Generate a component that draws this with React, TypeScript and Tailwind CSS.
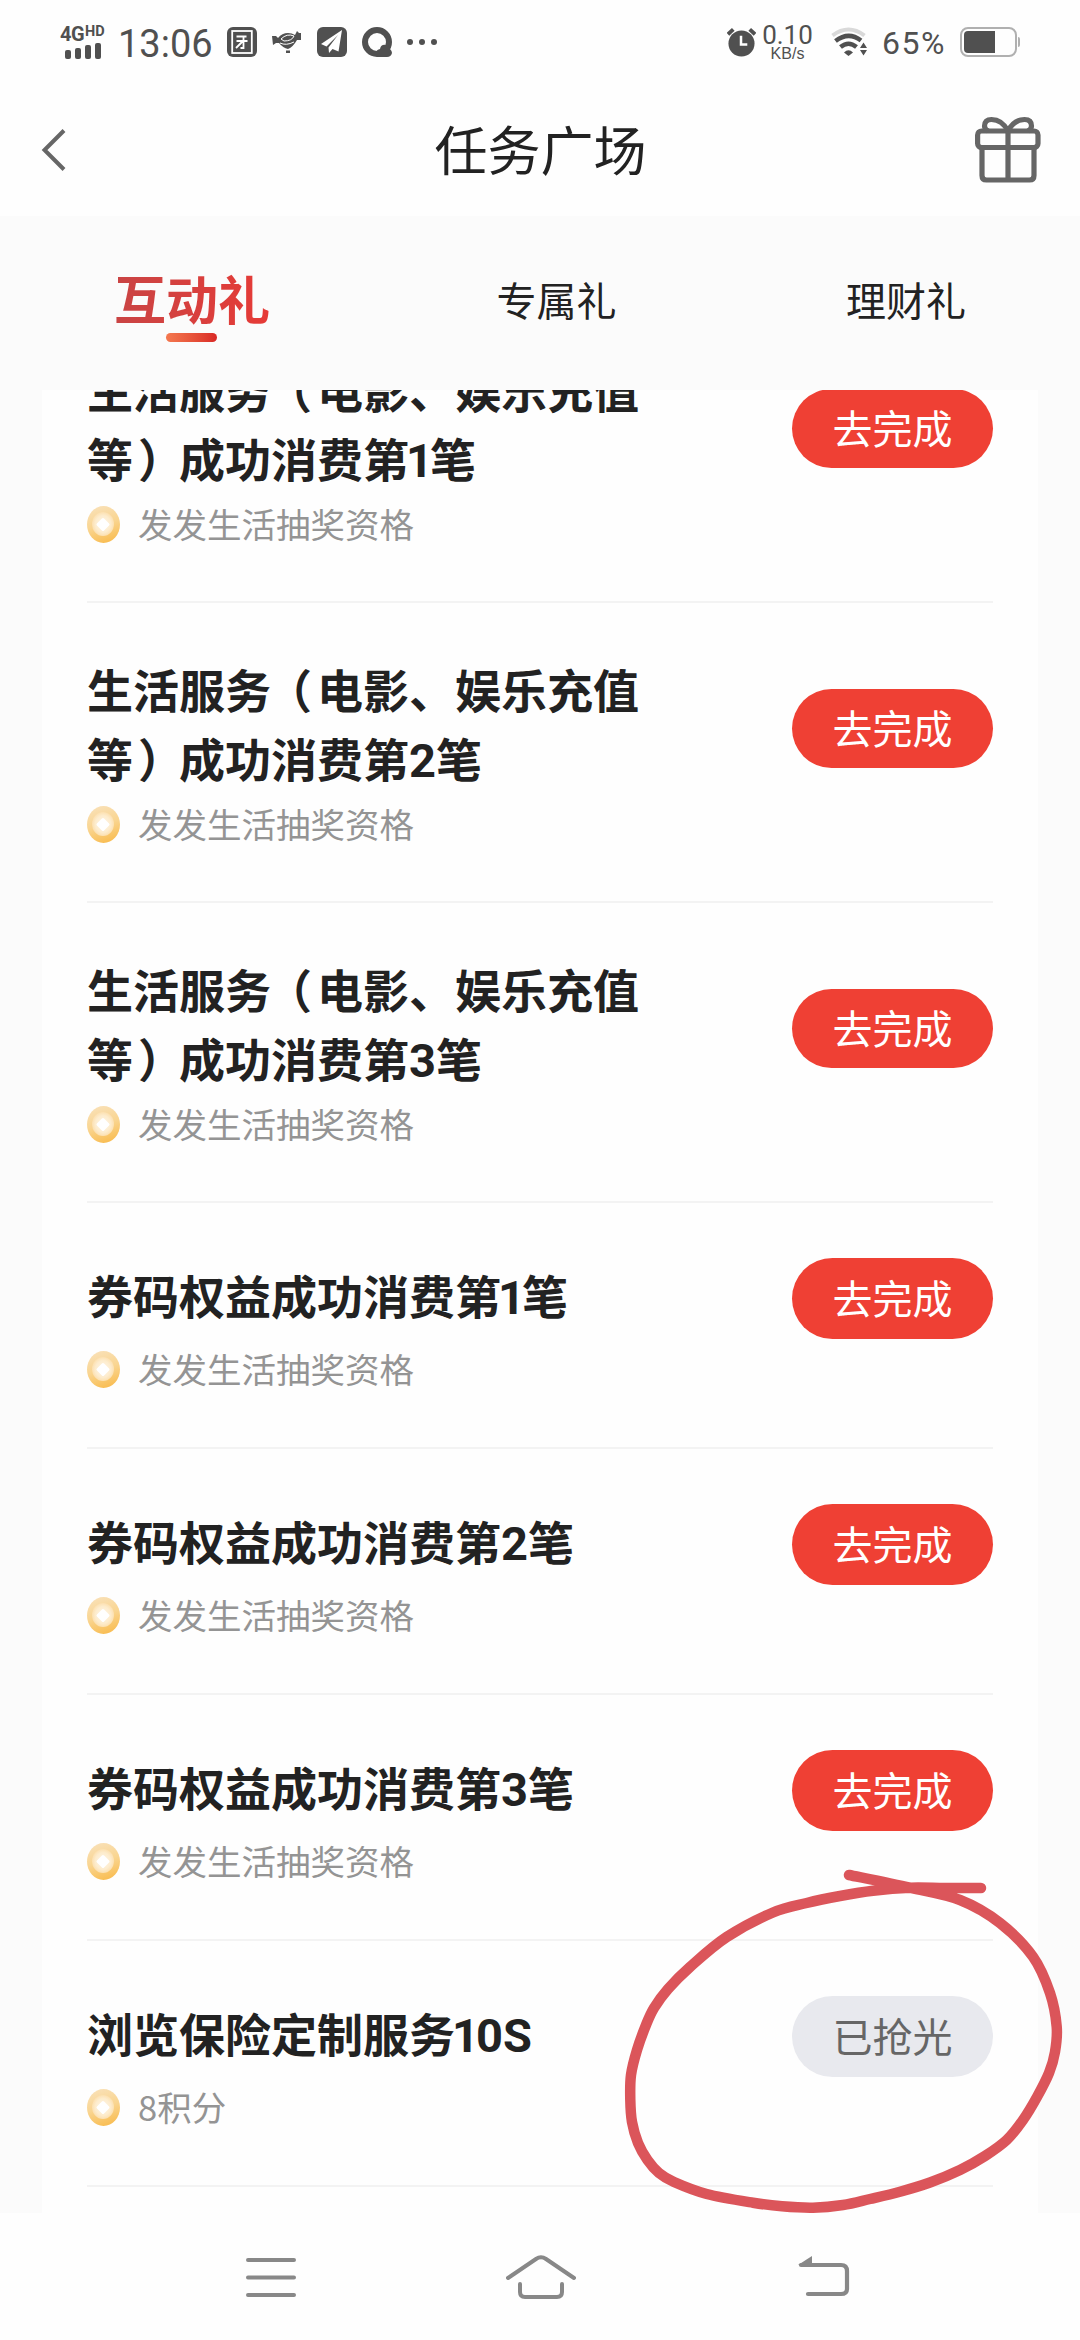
import React from "react";

type Task = { lines: React.ReactNode[]; reward: string; done?: boolean };

const One = () => <span className="-ml-[3px] -mr-[3px] font-['Roboto'] text-[47px]">1</span>;
const Num = ({ children }: { children: React.ReactNode }) => (
  <span className="font-['Roboto'] text-[47px]">{children}</span>
);
const life = (n: React.ReactNode) => [
  <>生活服务<span className="relative -left-[5px]">（</span>电影、娱乐充值</>,
  <>等<span className="relative left-[5px]">）</span>成功消费第{n}笔</>,
];
const REWARD = "发发生活抽奖资格";

const tasks: Task[] = [
  { lines: life(<One />), reward: REWARD },
  { lines: life(<Num>2</Num>), reward: REWARD },
  { lines: life(<Num>3</Num>), reward: REWARD },
  { lines: [<>券码权益成功消费第<One />笔</>], reward: REWARD },
  { lines: [<>券码权益成功消费第<Num>2</Num>笔</>], reward: REWARD },
  { lines: [<>券码权益成功消费第<Num>3</Num>笔</>], reward: REWARD },
  { lines: [<>浏览保险定制服务<One /><Num>0S</Num></>], reward: "8积分", done: true },
];

const strokePoints: [number, number][] = [
  [981, 1888], [945, 1888], [910, 1887.7], [873, 1890.7], [840, 1896], [806.7, 1903], [773, 1912.5],
  [726.7, 1937], [690, 1967], [668, 1989], [654, 2008], [646, 2025], [637, 2050], [631, 2075], [630.3, 2100],
  [632, 2122], [638, 2143], [647.5, 2160], [659, 2173], [674, 2182], [706.7, 2194], [753, 2202.7],
  [782, 2206.3], [813, 2207.7], [843, 2205], [870, 2199], [900, 2191.7], [930, 2182.500],
  [960, 2170], [985, 2156], [1006.7, 2140], [1023, 2120], [1037, 2097], [1049, 2073], [1055, 2052], [1056.7, 2026.7],
  [1050, 1993], [1033, 1956.7], [1000, 1923], [960, 1900], [910, 1887.7], [849, 1875],
];

/* Smooth curve through the points (Catmull-Rom converted to cubic Béziers). */
function smooth(p: [number, number][]) {
  let d = `M${p[0][0]} ${p[0][1]}`;
  for (let i = 0; i < p.length - 1; i++) {
    const a = p[Math.max(i - 1, 0)];
    const b = p[i];
    const c = p[i + 1];
    const e = p[Math.min(i + 2, p.length - 1)];
    d += `C${b[0] + (c[0] - a[0]) / 6} ${b[1] + (c[1] - a[1]) / 6} ${c[0] - (e[0] - b[0]) / 6} ${c[1] - (e[1] - b[1]) / 6} ${c[0]} ${c[1]}`;
  }
  return d;
}

function Coin() {
  return (
    <svg className="-mt-[1px] h-[37px] w-[33px] shrink-0" viewBox="0 0 33 37">
      <defs>
        <linearGradient id="rim" x1="0.3" y1="0" x2="0.6" y2="1">
          <stop offset="0" stopColor="#f9e0b6" />
          <stop offset="0.5" stopColor="#f9d591" />
          <stop offset="1" stopColor="#f9bd52" />
        </linearGradient>
        <radialGradient id="core">
          <stop offset="0" stopColor="#fff6e8" />
          <stop offset="0.7" stopColor="#fdeccd" />
          <stop offset="1" stopColor="#fce0b0" />
        </radialGradient>
      </defs>
      <ellipse cx="16.5" cy="18.5" rx="16.5" ry="18.5" fill="url(#rim)" />
      <ellipse cx="16" cy="18" rx="11" ry="12" fill="url(#core)" />
      <path d="M16 13.500L21 18.500L16 23.500L11 18.500Z" fill="#fff" stroke="#fff" strokeWidth="3" strokeLinejoin="round" />
    </svg>
  );
}

function StatusBar() {
  return (
    <div className="flex h-[84px] shrink-0 items-center pl-[60px] text-[#505050]">
      <div className="flex w-[47px] flex-col">
        <div className="flex h-[17px] items-start font-['Roboto'] leading-none font-bold">
          <span className="w-[25px] text-[20px] leading-[17px] tracking-[-0.5px]">4G</span>
          <span className="text-[14.500px] leading-[11px]">HD</span>
        </div>
        <div className="ml-[5px] flex h-[16px] items-end gap-[4px]">
          <i className="h-[9px] w-[6px] rounded-[2px] bg-[#505050]" />
          <i className="h-[11px] w-[6px] rounded-[2px] bg-[#505050]" />
          <i className="h-[14px] w-[6px] rounded-[2px] bg-[#505050]" />
          <i className="h-[16px] w-[6px] rounded-[2px] bg-[#505050]" />
        </div>
      </div>
      <div className="ml-[11px] w-[109px] pt-[4px] font-['Roboto'] text-[38px] leading-[44px] whitespace-nowrap">13:06</div>
      <svg className="h-[30px] w-[30px]" viewBox="0 0 30 30">
        <rect width="30" height="30" rx="6" fill="#505050" />
        <rect x="5.200" y="4" width="19.600" height="22" fill="none" stroke="#fff" strokeWidth="1.800" />
        <path d="M9.500 9.500H19.500M9.500 14H20.500M16.500 9.500V21H13.500M15.500 14.500L9 21" fill="none" stroke="#fff" strokeWidth="1.800" />
      </svg>
      <svg className="ml-[15px] h-[30px] w-[30px]" viewBox="0 0 30 30" fill="#505050">
        <path d="M0 9L4 9L6 11Q10 6 16 6Q20 6 23 8L25 4L27 6L29 6L29 13L25 13Q21 20 16 22Q11 21 7 16L4 16L1 18Z" />
        <path d="M9 12Q15 6 22 9Q20 14 12 14ZM8 16Q14 19 22 15" fill="none" stroke="#fff" strokeWidth="1" />
        <rect x="14" y="23.500" width="4" height="2.500" />
      </svg>
      <svg className="ml-[15px] h-[30px] w-[30px]" viewBox="0 0 30 30">
        <rect width="30" height="30" rx="6" fill="#505050" />
        <path d="M25 3L4 17L9.500 19.500L21 8L11.500 20.500L12 26L15.500 22L21.500 24.500Z" fill="#fff" />
      </svg>
      <svg className="ml-[15px] h-[30px] w-[30px]" viewBox="0 0 30 30">
        <circle cx="15" cy="15" r="12" fill="none" stroke="#505050" strokeWidth="6" />
        <path d="M15 27Q13 23 18 22Q19 17 24 18Q28 19 28 22Q30 24 30 26Q29 30 25 30H15Z" fill="#505050" />
      </svg>
      <div className="ml-[15px] flex w-[30px] justify-between">
        <i className="size-[6px] rounded-full bg-[#505050]" />
        <i className="size-[6px] rounded-full bg-[#505050]" />
        <i className="size-[6px] rounded-full bg-[#505050]" />
      </div>
      <svg className="ml-[290px] h-[30px] w-[29px]" viewBox="0 0 30 30">
        <circle cx="15" cy="16.500" r="13.500" fill="#505050" />
        <path d="M1 7L6.500 2M29 7L23.500 2" stroke="#505050" strokeWidth="4" />
        <path d="M14.500 8.500V17.500H21" fill="none" stroke="#fff" strokeWidth="2.600" />
      </svg>
      <div className="ml-[6px] flex w-[51px] flex-col items-center font-['Roboto'] leading-none">
        <span className="text-[26px] leading-[24px]">0.10</span>
        <span className="font-['Liberation_Sans'] text-[16px] leading-[14px]">KB/s</span>
      </div>
      <svg className="ml-[18px] h-[30px] w-[37px]" viewBox="0 0 37 30" fill="none" stroke="#505050">
        <path d="M1.500 8.500Q17.500 -3.500 33.500 8.500" stroke="#d9d9d9" strokeWidth="4" />
        <path d="M4.500 14Q17.500 4 30 13.500" strokeWidth="4.500" />
        <path d="M9.500 20Q17.500 13.500 25.500 20" strokeWidth="4.500" />
        <path d="M13 25.500Q17.500 21 22 25.500L17.500 29Z" fill="#505050" stroke="none" />
        <path d="M29 21L32.500 15.500L36 21ZM29 23L32.500 28.500L36 23Z" fill="#505050" stroke="none" />
      </svg>
      <div className="ml-[14px] w-[70px] pt-[2px] font-['Roboto'] text-[32px] leading-[36px] tracking-[1.500px]">65%</div>
      <div className="ml-[8px] flex items-center">
        <div className="h-[30px] w-[57px] rounded-[8px] border-2 border-[#b0b0b0] p-[2px]">
          <div className="h-full w-[31px] rounded-l-[4px] bg-[#505050]" />
        </div>
        <div className="ml-px h-[10px] w-[2px] rounded-r bg-[#b0b0b0]" />
      </div>
    </div>
  );
}

function TaskRow({ task }: { task: Task }) {
  const two = task.lines.length === 2;
  return (
    <div className={`flex shrink-0 justify-between border-b-2 border-[#f3f3f3] ${two ? "h-[300px] pt-[51px]" : "h-[246px] pt-[57px]"}`}>
      <div>
        <div className="text-[46px] font-bold whitespace-nowrap text-[#222]">
          {task.lines.map((l, i) => (
            <div key={i} className="h-[69px] leading-[69px]">{l}</div>
          ))}
        </div>
        <div className={`flex h-[52px] items-center gap-[18px] ${two ? "mt-[7px]" : "mt-[15px]"}`}>
          <Coin />
          <span className="-mt-[4px] text-[34.5px] leading-[52px] text-[#949494]">{task.reward}</span>
        </div>
      </div>
      <button
        className={`flex w-[201px] items-center justify-center rounded-full pb-[4px] text-[40px] leading-none ${two ? "mt-[35px] h-[79px]" : "-mt-[2px] h-[81px]"} ${task.done ? "bg-[#e8e9ee] text-[#666]" : "bg-[#ef4034] text-white"}`}
      >
        {task.done ? "已抢光" : "去完成"}
      </button>
    </div>
  );
}

export default function App() {
  return (
    <div className="relative flex h-[2340px] w-[1080px] flex-col overflow-hidden bg-[#fefefe] font-['Noto_Sans_CJK_SC',sans-serif]">
      <StatusBar />
      <header className="flex h-[132px] shrink-0 items-center justify-between pr-[39px] pl-[40px]">
        <svg className="h-[42px] w-[66px]" viewBox="0 0 66 42" fill="none" stroke="#666" strokeWidth="4">
          <path d="M24 1.500L4.500 21L24 40.500" />
        </svg>
        <h1 className="-mt-[3px] text-[53px] leading-none text-[#222]">任务广场</h1>
        <svg className="h-[68px] w-[66px]" viewBox="0 0 66 68" fill="none" stroke="#666" strokeWidth="5.200">
          <rect x="2.600" y="15" width="60.400" height="16.500" rx="4" />
          <path d="M7 31.500V59.500Q7 64 11.500 64H54.500Q59 64 59 59.500V31.500M33 15V64" />
          <path d="M33 15Q27 3.500 16.500 3.500Q9.500 3.500 9.500 10Q9.500 13 13 15M33 15Q39 3.500 49.500 3.500Q56.500 3.500 56.500 10Q56.500 13 53 15" />
        </svg>
      </header>
      <main className="flex h-[1997px] shrink-0 flex-col bg-[#fbfbfb]">
        <nav className="flex h-[174px] shrink-0 items-start justify-between px-[114px] text-[40px] leading-[60px] text-[#222]">
          <div className="flex flex-col items-center">
            <span className="mt-[47px] bg-gradient-to-r from-[#c94444] to-[#e63a36] bg-clip-text text-[52px] leading-[70px] font-bold text-transparent">互动礼</span>
            <i className="mr-[2px] h-[9px] w-[51px] rounded-full bg-gradient-to-r from-[#f4784f] to-[#d92626]" />
          </div>
          <span className="mt-[53px] ml-[-3px]">专属礼</span>
          <span className="mt-[53px]">理财礼</span>
        </nav>
        <section className="mx-[42px] min-h-0 flex-1 overflow-hidden bg-[#fefefe] px-[45px]">
          <div className="-mt-[87px] flex flex-col">
            {tasks.map((t, i) => (
              <TaskRow key={i} task={t} />
            ))}
          </div>
        </section>
      </main>
      <footer className="flex flex-1 items-start pl-[246px]">
        <svg className="mt-[45px] h-[39px] w-[50px]" viewBox="0 0 50 39" stroke="#888" strokeWidth="4" strokeLinecap="round">
          <path d="M2 2H48M2 19.500H48M2 37H48" />
        </svg>
        <svg className="mt-[41px] ml-[210px] h-[45px] w-[70px]" viewBox="0 0 70 45" fill="none" stroke="#888" strokeWidth="4" strokeLinecap="round">
          <path d="M2 24L30 5Q35 1.500 40 5L68 24M14 30V38Q14 43 19 43H51Q56 43 56 38V30" />
        </svg>
        <svg className="mt-[42px] ml-[222px] h-[42px] w-[52px]" viewBox="0 0 52 42" fill="none" stroke="#888" strokeWidth="4.200" strokeLinecap="round">
          <path d="M3 10H43Q49 10 49 16V34Q49 39 43 39H10" />
          <path d="M0 10L14 1V10Z" fill="#888" stroke="none" />
        </svg>
      </footer>
      <svg className="pointer-events-none absolute inset-0 h-[2340px] w-[1080px]" viewBox="0 0 1080 2340">
        <path d={smooth(strokePoints)} fill="none" stroke="#db555a" strokeWidth="10.500" strokeLinecap="round" strokeLinejoin="round" />
      </svg>
    </div>
  );
}
